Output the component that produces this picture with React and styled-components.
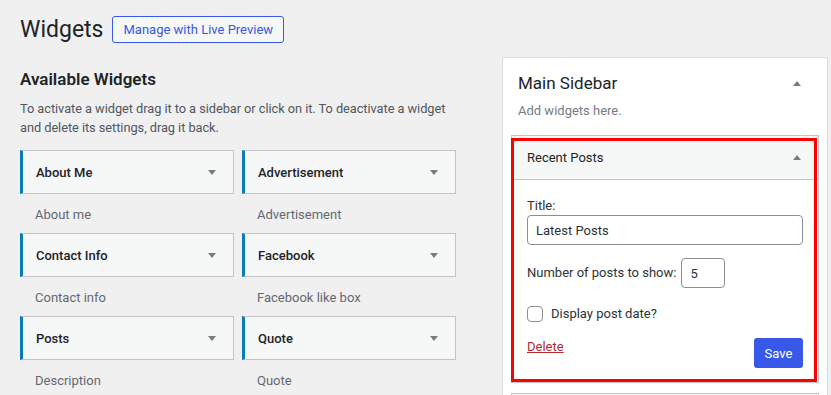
import React from "react";
import styled, { createGlobalStyle } from "styled-components";

const GlobalStyle = createGlobalStyle`
  html, body { margin: 0; padding: 0; }
  body {
    background: #f0f0f1;
    font-family: Roboto, "Liberation Sans", sans-serif;
    color: #3c434a;
    overflow: hidden;
  }
  * { box-sizing: border-box; }
`;

const Page = styled.div`
  padding: 16px 3px 0 20px;
`;

const Header = styled.div`
  display: flex;
  align-items: center;
  gap: 9px;
  height: 27px;
`;

const PageTitle = styled.h1`
  margin: 0;
  font-size: 23px;
  font-weight: 400;
  line-height: 27px;
  color: #1d2327;
`;

const OutlineButton = styled.button`
  height: 27px;
  padding: 0 10px;
  border: 1px solid #3858e9;
  border-radius: 3px;
  background: #f6f7f7;
  color: #3858e9;
  font-family: inherit;
  font-size: 13px;
  line-height: 25px;
`;

const Columns = styled.div`
  display: flex;
  gap: 46px;
  margin-top: 14px;
  align-items: flex-start;
`;

const LeftColumn = styled.div`
  width: 436px;
  flex: none;
`;

const SectionTitle = styled.h2`
  margin: 11px 0 0;
  font-size: 17px;
  font-weight: 600;
  line-height: 22px;
  color: #1d2327;
`;

const Intro = styled.p`
  margin: 9px 0 0;
  font-size: 12.8px;
  letter-spacing: -0.05px;
  line-height: 19px;
  color: #50575e;
`;

const WidgetGrid = styled.div`
  display: grid;
  grid-template-columns: 214px 214px;
  column-gap: 8px;
  margin-top: 13px;
`;

const Arrow = styled.span`
  width: 0;
  height: 0;
  flex: none;
  border-left: 4px solid transparent;
  border-right: 4px solid transparent;
  ${(p) => (p.$up ? "border-bottom: 5px solid #787c82;" : "border-top: 5px solid #787c82;")}
`;

const WidgetBar = styled.div`
  height: 44px;
  display: flex;
  align-items: center;
  justify-content: space-between;
  padding: 0 17px 0 13px;
  background: #f6f7f7;
  border: 1px solid #c3c4c7;
  border-left: 3px solid #0a7cb8;
`;

const WidgetName = styled.span`
  font-size: 13px;
  font-weight: 500;
  color: #1d2327;
`;

const WidgetDesc = styled.div`
  padding: 12px 0 9px 15px;
  font-size: 13px;
  line-height: 18px;
  color: #646970;
`;

const Sidebar = styled.div`
  flex: 1;
  min-height: 360px;
  background: #fff;
  border: 1px solid #dcdcde;
  border-bottom: none;
  padding: 0 8px;
`;

const SidebarHead = styled.div`
  display: flex;
  align-items: center;
  justify-content: space-between;
  padding: 13px 18px 0 7px;
`;

const SidebarTitle = styled.h2`
  margin: 0;
  font-size: 17px;
  font-weight: 400;
  line-height: 24px;
  color: #1d2327;
`;

const SidebarDesc = styled.div`
  margin-top: 7px;
  padding-left: 7px;
  font-size: 13px;
  line-height: 18px;
  color: #787c82;
`;

const OpenWidget = styled.div`
  position: relative;
  margin-top: 15px;
  background: #fff;
  border: 1px solid #c3c4c7;
  box-shadow: 0 1px 1px rgba(0, 0, 0, 0.04);
`;

const Highlight = styled.div`
  position: absolute;
  top: 2px;
  left: -1px;
  right: 1px;
  bottom: 0;
  border: 3px solid #ff0000;
  pointer-events: none;
`;

const OpenHead = styled.div`
  height: 44px;
  display: flex;
  align-items: center;
  justify-content: space-between;
  padding: 0 17px 0 15px;
  background: #f6f7f7;
  border-bottom: 1px solid #c3c4c7;
`;

const OpenTitle = styled.span`
  font-size: 13px;
  font-weight: 400;
  color: #1d2327;
`;

const Form = styled.div`
  padding: 17px 15px 14px;
  font-size: 13px;
  color: #2c3338;
`;

const Label = styled.label`
  display: block;
  line-height: 18px;
`;

const TextInput = styled.input`
  display: block;
  width: ${(p) => p.$width || "100%"};
  height: 30px;
  padding: 0 8px;
  border: 1px solid #8c8f94;
  border-radius: 4px;
  background: #fff;
  font-family: inherit;
  font-size: 13px;
  color: #2c3338;
  outline: none;
`;

const InlineRow = styled.div`
  display: flex;
  align-items: center;
  gap: ${(p) => p.$gap || 5}px;
  margin-top: ${(p) => p.$top}px;
  line-height: 18px;
`;

const Check = styled.span`
  width: 16px;
  height: 16px;
  flex: none;
  border: 1px solid #8c8f94;
  border-radius: 4px;
  background: #fff;
`;

const Footer = styled.div`
  display: flex;
  justify-content: space-between;
  align-items: flex-start;
  margin-top: 15px;
`;

const DeleteLink = styled.a`
  color: #b32d2e;
  text-decoration: underline;
  line-height: 18px;
  cursor: pointer;
`;

const SaveButton = styled.button`
  height: 30px;
  min-width: 49px;
  padding: 0 10px;
  border: none;
  border-radius: 3px;
  background: #3858e9;
  color: #fff;
  font-family: inherit;
  font-size: 13px;
`;

const ClosedWidget = styled.div`
  height: 44px;
  margin-top: 10px;
  background: #f6f7f7;
  border: 1px solid #c3c4c7;
`;

const widgets = [
  ["About Me", "About me"],
  ["Advertisement", "Advertisement"],
  ["Contact Info", "Contact info"],
  ["Facebook", "Facebook like box"],
  ["Posts", "Description"],
  ["Quote", "Quote"],
];

export default function App() {
  return (
    <Page>
      <GlobalStyle />
      <Header>
        <PageTitle>Widgets</PageTitle>
        <OutlineButton>Manage with Live Preview</OutlineButton>
      </Header>
      <Columns>
        <LeftColumn>
          <SectionTitle>Available Widgets</SectionTitle>
          <Intro>
            To activate a widget drag it to a sidebar or click on it. To deactivate a widget and
            delete its settings, drag it back.
          </Intro>
          <WidgetGrid>
            {widgets.map(([name, desc]) => (
              <div key={name}>
                <WidgetBar>
                  <WidgetName>{name}</WidgetName>
                  <Arrow />
                </WidgetBar>
                <WidgetDesc>{desc}</WidgetDesc>
              </div>
            ))}
          </WidgetGrid>
        </LeftColumn>
        <Sidebar>
          <SidebarHead>
            <SidebarTitle>Main Sidebar</SidebarTitle>
            <Arrow $up />
          </SidebarHead>
          <SidebarDesc>Add widgets here.</SidebarDesc>
          <OpenWidget>
            <OpenHead>
              <OpenTitle>Recent Posts</OpenTitle>
              <Arrow $up />
            </OpenHead>
            <Form>
              <Label>Title:</Label>
              <TextInput defaultValue="Latest Posts" />
              <InlineRow $top={13} $gap={5}>
                <span>Number of posts to show:</span>
                <TextInput $width="44px" defaultValue="5" />
              </InlineRow>
              <InlineRow $top={17} $gap={8}>
                <Check />
                <span>Display post date?</span>
              </InlineRow>
              <Footer>
                <DeleteLink>Delete</DeleteLink>
                <SaveButton>Save</SaveButton>
              </Footer>
            </Form>
            <Highlight />
          </OpenWidget>
          <ClosedWidget />
        </Sidebar>
      </Columns>
    </Page>
  );
}
